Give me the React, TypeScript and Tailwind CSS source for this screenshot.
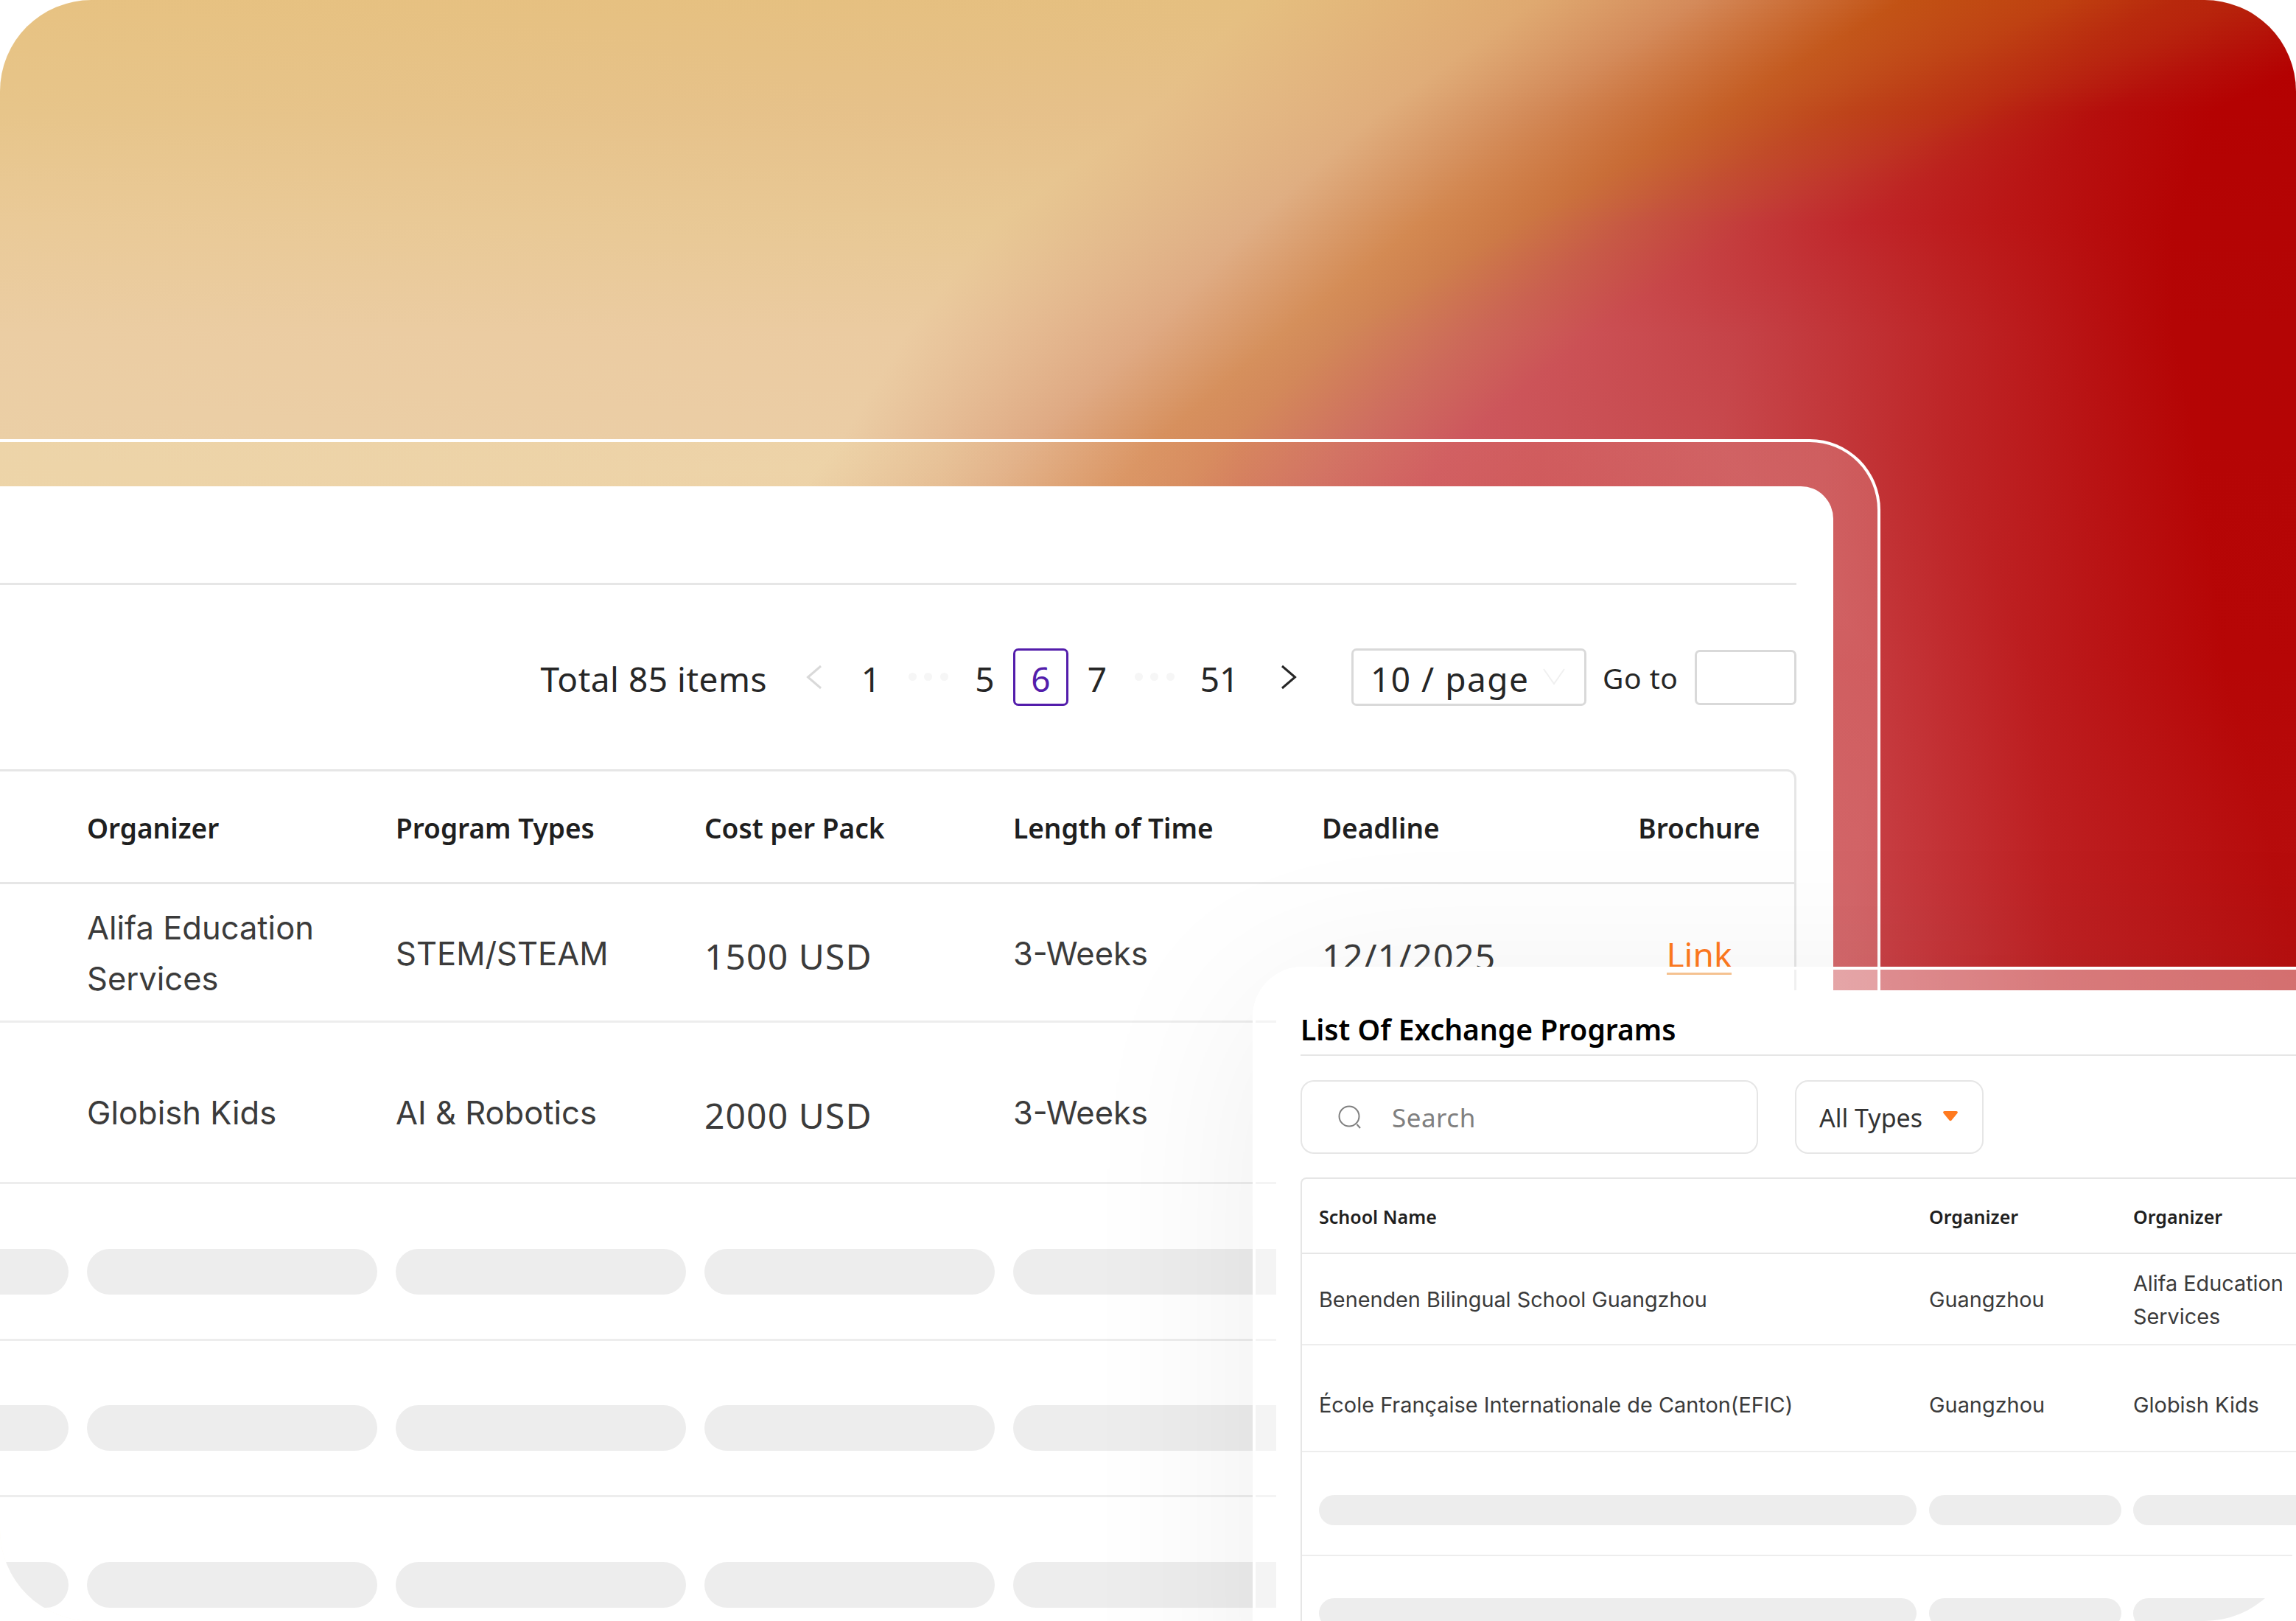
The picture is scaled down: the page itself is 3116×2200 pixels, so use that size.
import type { ReactNode } from "react";

type Stop = [x: number, r: number, g: number, b: number];

// Colour mesh for the backdrop: each row holds the same number of stops,
// positions and colours are interpolated between rows.
const mesh: { y: number; stops: Stop[] }[] = [
  {
    y: 0,
    stops: [
      [0, 231, 194, 130],
      [1700, 229, 191, 128],
      [2080, 223, 169, 112],
      [2300, 212, 138, 90],
      [2580, 194, 82, 20],
      [2800, 191, 64, 16],
      [2950, 184, 40, 12],
      [3030, 183, 36, 11],
      [3140, 181, 24, 8],
      [3300, 180, 0, 0],
    ],
  },
  {
    y: 150,
    stops: [
      [0, 231, 197, 138],
      [1560, 230, 192, 138],
      [1870, 224, 174, 124],
      [2080, 211, 138, 88],
      [2330, 197, 96, 40],
      [2500, 190, 68, 26],
      [2660, 187, 48, 20],
      [2740, 184, 32, 18],
      [2850, 181, 14, 12],
      [3000, 180, 2, 2],
    ],
  },
  {
    y: 300,
    stops: [
      [0, 234, 202, 152],
      [1350, 232, 200, 148],
      [1700, 223, 174, 132],
      [1930, 211, 136, 80],
      [2060, 204, 120, 68],
      [2220, 198, 86, 66],
      [2380, 195, 58, 58],
      [2520, 192, 38, 42],
      [2700, 187, 24, 24],
      [2950, 180, 4, 4],
    ],
  },
  {
    y: 450,
    stops: [
      [0, 235, 205, 163],
      [1230, 235, 203, 161],
      [1560, 223, 169, 130],
      [1740, 213, 144, 92],
      [1820, 209, 135, 88],
      [2000, 204, 104, 88],
      [2160, 203, 80, 84],
      [2360, 197, 66, 71],
      [2640, 190, 38, 40],
      [2950, 180, 5, 5],
    ],
  },
  {
    y: 596,
    stops: [
      [0, 235, 207, 166],
      [1140, 235, 205, 165],
      [1400, 223, 170, 132],
      [1570, 215, 144, 94],
      [1660, 213, 138, 92],
      [1830, 207, 112, 98],
      [1980, 205, 88, 94],
      [2330, 200, 74, 78],
      [2640, 190, 38, 40],
      [2980, 181, 5, 5],
    ],
  },
  {
    y: 900,
    stops: [
      [0, 235, 209, 168],
      [900, 235, 207, 166],
      [1100, 223, 170, 132],
      [1300, 215, 144, 94],
      [1400, 213, 138, 92],
      [1600, 207, 110, 98],
      [1750, 205, 88, 94],
      [2550, 197, 56, 60],
      [2760, 188, 28, 30],
      [3020, 182, 6, 6],
    ],
  },
  {
    y: 1350,
    stops: [
      [0, 235, 209, 168],
      [900, 235, 207, 166],
      [1100, 223, 170, 132],
      [1300, 215, 144, 94],
      [1400, 213, 138, 92],
      [1600, 207, 110, 98],
      [1750, 205, 98, 96],
      [2500, 202, 72, 78],
      [2800, 190, 34, 36],
      [3130, 183, 16, 16],
    ],
  },
];

const STRIP = 6;
const strips = Array.from({ length: 1350 / STRIP }, (_, i) => {
  const y = i * STRIP;
  const next = mesh.findIndex((row) => row.y > y);
  const a = mesh[next - 1];
  const b = mesh[next];
  const t = (y - a.y) / (b.y - a.y);
  const stops = a.stops.map((s, k) => {
    const [x, r, g, bl] = s.map((v, n) => v + (b.stops[k][n] - v) * t);
    return `rgb(${r.toFixed(1)} ${g.toFixed(1)} ${bl.toFixed(1)}) ${x.toFixed(0)}px`;
  });
  return `linear-gradient(90deg, ${stops.join(", ")})`;
});

function Backdrop() {
  return (
    <div className="absolute inset-0 flex flex-col">
      {strips.map((background, i) => (
        <div key={i} className="h-[6px] shrink-0" style={{ background }} />
      ))}
    </div>
  );
}

function Dots() {
  return (
    <div className="flex w-[77px] justify-center gap-[10.5px] pb-[1px]">
      <span className="size-[11px] rounded-full bg-[#f6f6f6]" />
      <span className="size-[11px] rounded-full bg-[#f6f6f6]" />
      <span className="size-[11px] rounded-full bg-[#f6f6f6]" />
    </div>
  );
}

function Pagination() {
  return (
    <div className="flex h-[78px] items-center justify-end font-['Noto_Sans',sans-serif] text-[46px] leading-none text-[#262626]">
      <span className="mr-[26px] pt-[4px] tracking-[0.5px] whitespace-nowrap">Total 85 items</span>
      <span className="flex w-[76px] justify-center">
        <svg className="h-[34px] w-[24px]" viewBox="0 0 24 34" fill="none" stroke="#d9d9d9" strokeWidth="3">
          <path d="M21 2 3.500 17 21 32" />
        </svg>
      </span>
      <span className="w-[78px] pt-[4px] text-center">1</span>
      <Dots />
      <span className="w-[77px] pt-[4px] text-center">5</span>
      <span className="flex h-[78px] w-[75px] items-center justify-center rounded-[7px] border-[3px] border-[#531dab] pt-[4px] text-[#531dab]">
        6
      </span>
      <span className="w-[78px] pt-[4px] text-center">7</span>
      <Dots />
      <span className="w-[100px] pt-[4px] text-center">51</span>
      <span className="flex w-[87px] justify-center">
        <svg className="h-[34px] w-[24px]" viewBox="0 0 24 34" fill="none" stroke="#262626" strokeWidth="3">
          <path d="M3 2 20.500 17 3 32" />
        </svg>
      </span>
      <span className="ml-[42px] flex h-[78px] w-[319px] items-center rounded-[7px] border-[3px] border-[#d9d9d9] bg-white/60 pt-[4px] pl-[23px] tracking-[1.5px] whitespace-nowrap">
        10 / page
        <svg className="mb-[6px] ml-[18px] h-[24px] w-[30px]" viewBox="0 0 30 24" fill="none" stroke="#f0f0f0" strokeWidth="2">
          <path d="M1 2 15 22 29 2" />
        </svg>
      </span>
      <span className="ml-[22px] w-[125px] text-[39px] tracking-[0.5px] whitespace-nowrap">Go to</span>
      <span className="h-[75px] w-[138px] rounded-[7px] border-[3px] border-[#d9d9d9] bg-white/60" />
    </div>
  );
}

function Pill() {
  return <div className="h-[62px] w-[394px] shrink-0 rounded-full bg-[#ededed]" />;
}

function Cell({ children }: { children?: ReactNode }) {
  return <div className="w-[394px] shrink-0 whitespace-nowrap">{children}</div>;
}

function ProgramsWindow() {
  return (
    <div className="absolute top-[596px] left-0 h-[1700px] w-[2552px] rounded-tr-[96px] border-t-4 border-r-4 border-white bg-[linear-gradient(90deg,#f4e6b038_0,#f4e6b038_50%,#e8886820_66%,#ec8c7c28_82%,#f0cac640_97%)] pt-[60px] pr-[60px]">
      <div className="h-full overflow-hidden rounded-tr-[44px] bg-white pt-[131px] pr-[50px]">
        <div className="h-[3px] bg-[#e6e6e6]" />
        <div className="pt-[86px] pb-[86px]">
          <Pagination />
        </div>
        <div className="h-[1300px] overflow-hidden rounded-tr-[13px] border-t-3 border-r-3 border-[#e6e6e6]">
          <div className="flex h-[153px] items-center gap-[25px] border-b-3 border-[#e6e6e6] pt-[4px] pl-[118px] font-['Noto_Sans',sans-serif] text-[37px] font-semibold text-[#1f1f1f]">
            <Cell>Organizer</Cell>
            <Cell>Program Types</Cell>
            <Cell>Cost per Pack</Cell>
            <Cell>Length of Time</Cell>
            <Cell>Deadline</Cell>
            <div className="w-[186px] text-center">Brochure</div>
          </div>
          <div className="flex h-[188px] items-center gap-[25px] border-b-3 border-[#ededed] pt-[3px] pl-[118px] font-['Inter',sans-serif] text-[43.500px] leading-[69px] text-[#3b3b3b]">
            <Cell>
              Alifa Education
              <br />
              Services
            </Cell>
            <Cell>STEM/STEAM</Cell>
            <div className="w-[394px] shrink-0 pt-[6px] font-['Noto_Sans',sans-serif] text-[48px] tracking-[1.1px]">1500 USD</div>
            <Cell>3-Weeks</Cell>
            <div className="w-[394px] shrink-0 pt-[6px] font-['Noto_Sans',sans-serif] text-[48px] tracking-[0.9px]">12/1/2025</div>
            <div className="flex w-[186px] justify-center pb-[4px]">
              <a className="h-[62px] border-b-3 border-[#ee9a48] font-['Noto_Sans',sans-serif] text-[46px] leading-[69px] text-[#ff7a1f]">
                Link
              </a>
            </div>
          </div>
          <div className="flex h-[219px] items-center gap-[25px] border-b-3 border-[#ededed] pt-[28px] pl-[118px] font-['Inter',sans-serif] text-[43.500px] leading-[69px] text-[#3b3b3b]">
            <Cell>Globish Kids</Cell>
            <Cell>AI &amp; Robotics</Cell>
            <div className="w-[394px] shrink-0 pt-[7px] font-['Noto_Sans',sans-serif] text-[48px] tracking-[1.1px]">2000 USD</div>
            <Cell>3-Weeks</Cell>
          </div>
          {[0, 1, 2].map((i) => (
            <div
              key={i}
              className="-ml-[301px] flex h-[212.5px] items-center gap-[25px] border-b-3 border-[#ededed] pt-[28px]"
            >
              <Pill />
              <Pill />
              <Pill />
              <Pill />
              <Pill />
              <Pill />
            </div>
          ))}
        </div>
      </div>
    </div>
  );
}

function ExchangeWindow() {
  return (
    <div className="absolute top-[1312px] left-[1700px] h-[1100px] w-[1600px] rounded-tl-[68px] border-t-4 border-l-4 border-white bg-white/40 pt-[28px] pl-[28px] shadow-[0_40px_640px_rgba(0,0,0,0.07)]">
      <div className="h-full rounded-tl-[36px] bg-white pl-[33px]">
        <div className="flex h-[89px] items-center border-b-2 border-[#e6e6e6] pt-[20px] font-['Noto_Sans',sans-serif] text-[39px] font-semibold text-black">
          List Of Exchange Programs
        </div>
        <div className="flex gap-[50px] pt-[33px] pb-[32px] font-['Noto_Sans',sans-serif]">
          <div className="flex h-[100px] w-[621px] items-center rounded-[18px] border-2 border-[#e6e6e6] pl-[49px]">
            <svg className="size-[32px]" viewBox="0 0 32 32" fill="none" stroke="#808080" strokeWidth="2">
              <circle cx="15" cy="15" r="13.500" />
              <path d="M25.500 26 30 31" />
            </svg>
            <span className="ml-[41px] pt-[2px] text-[35px] tracking-[0.5px] text-[#808080]">Search</span>
          </div>
          <div className="flex h-[100px] w-[256px] items-center rounded-[18px] border-2 border-[#e6e6e6] pl-[31px] text-[#333333]">
            <span className="pt-[2px] text-[34px] whitespace-nowrap">All Types</span>
            <svg className="mb-[2px] ml-[28px] h-[14px] w-[20px]" viewBox="0 0 20 14" fill="#ff7a1f">
              <path d="M2 0h16c1.800 0 2.500 1.700 1.300 3L11.500 12.600c-.8.900-2.200.9-3 0L.7 3C-.5 1.700.2 0 2 0z" />
            </svg>
          </div>
        </div>
        <div className="h-[700px] rounded-tl-[8px] border-t-2 border-l-2 border-[#e6e6e6]">
          <div className="flex h-[102px] items-center border-b-2 border-[#e6e6e6] pt-[3px] pl-[23px] font-['Noto_Sans',sans-serif] text-[25px] font-semibold text-[#1f1f1f]">
            <div className="w-[828px] shrink-0">School Name</div>
            <div className="w-[277px] shrink-0">Organizer</div>
            <div>Organizer</div>
          </div>
          <div className="flex h-[124px] items-center border-b-2 border-[#ededed] pt-[1px] pl-[23px] font-['Inter',sans-serif] text-[28.800px] leading-[45px] text-[#3b3b3b]">
            <div className="w-[828px] shrink-0">Benenden Bilingual School Guangzhou</div>
            <div className="w-[277px] shrink-0">Guangzhou</div>
            <div className="whitespace-nowrap">
              Alifa Education
              <br />
              Services
            </div>
          </div>
          <div className="flex h-[145px] items-center border-b-2 border-[#ededed] pt-[17px] pl-[23px] font-['Inter',sans-serif] text-[28.900px] leading-[45px] text-[#3b3b3b]">
            <div className="w-[828px] shrink-0">École Française Internationale de Canton(EFIC)</div>
            <div className="w-[277px] shrink-0">Guangzhou</div>
            <div className="whitespace-nowrap">Globish Kids</div>
          </div>
          {[0, 1].map((i) => (
            <div key={i} className="flex h-[140.500px] items-center gap-[16.500px] border-b-2 border-[#ededed] pt-[18px] pl-[23px]">
              <div className="h-[41px] w-[811px] shrink-0 rounded-full bg-[#ededed]" />
              <div className="h-[41px] w-[261px] shrink-0 rounded-full bg-[#ededed]" />
              <div className="h-[41px] w-[261px] shrink-0 rounded-full bg-[#ededed]" />
            </div>
          ))}
        </div>
      </div>
    </div>
  );
}

export default function App() {
  return (
    <div className="bg-white">
      <div className="relative h-[2200px] w-[3116px] overflow-hidden rounded-[124px]">
        <Backdrop />
        <ProgramsWindow />
        <ExchangeWindow />
      </div>
    </div>
  );
}
